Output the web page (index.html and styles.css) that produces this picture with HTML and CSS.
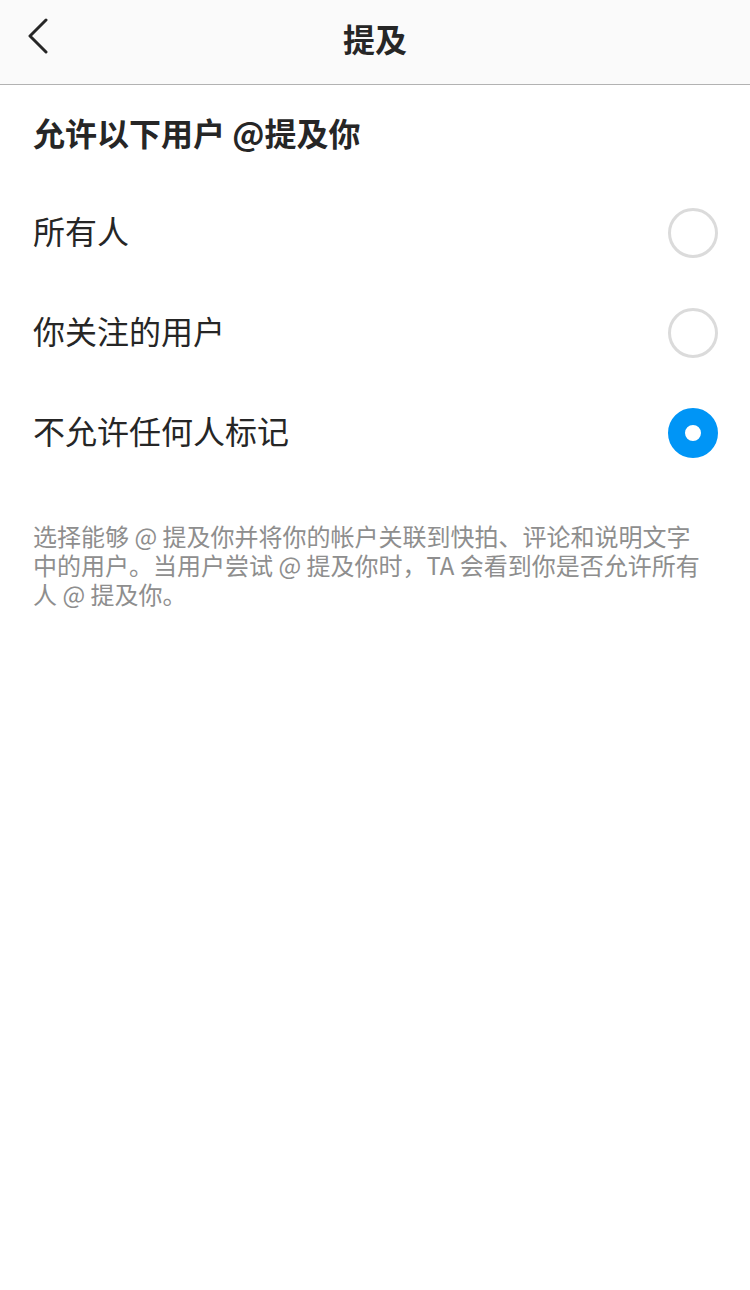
FILE: index.html
```html
<!DOCTYPE html>
<html lang="zh-CN">
  <head>
    <meta charset="UTF-8" />
    <meta name="viewport" content="width=device-width, initial-scale=1.0" />
    <title>提及</title>
    <link rel="stylesheet" href="styles.css">
  </head>
  <body>
    <header class="nav-bar">
      <button class="back-button" aria-label="返回">
        <svg width="24" height="36" viewBox="0 0 24 36">
          <polyline points="20,2 4,18 20,34" fill="none" stroke="#262626" stroke-width="3" stroke-linecap="round" stroke-linejoin="round" />
        </svg>
      </button>
      <h1 class="nav-title">提及</h1>
    </header>

    <main class="settings">
      <h2 class="section-title">允许以下用户 @提及你</h2>

      <div class="option-list">
        <label class="option">
          <span class="option-label">所有人</span>
          <span class="radio"></span>
        </label>
        <label class="option">
          <span class="option-label">你关注的用户</span>
          <span class="radio"></span>
        </label>
        <label class="option">
          <span class="option-label">不允许任何人标记</span>
          <span class="radio checked"></span>
        </label>
      </div>

      <p class="hint">
        选择能够 @ 提及你并将你的帐户关联到快拍、评论和说明文字中的用户。当用户尝试 @ 提及你时，TA 会看到你是否允许所有人 @ 提及你。
      </p>
    </main>
  </body>
</html>
```

FILE: styles.css
```css
body {
  margin: 0;
  background: #ffffff;
  font-family: "Noto Sans CJK SC", "Noto Sans", sans-serif;
  color: #262626;
}

.nav-bar {
  height: 84px;
  background: #fafafa;
  border-bottom: 1px solid #b2b2b2;
  display: flex;
  align-items: center;
  justify-content: center;
  position: relative;
}

.back-button {
  position: absolute;
  left: 26px;
  top: 18px;
  padding: 0;
  border: none;
  background: none;
  display: flex;
}

.nav-title {
  margin: 0;
  font-size: 32px;
  font-weight: bold;
  line-height: 1;
  padding-bottom: 8px;
}

.settings {
  padding: 0 33px;
}

.section-title {
  margin: 0;
  height: 98px;
  display: flex;
  align-items: center;
  font-size: 32px;
  font-weight: bold;
  padding-bottom: 4px;
  box-sizing: border-box;
}

.option {
  height: 100px;
  display: flex;
  align-items: center;
  justify-content: space-between;
}

.option-label {
  font-size: 32px;
  line-height: 1;
  padding-bottom: 6px;
}

.radio {
  width: 50px;
  height: 50px;
  box-sizing: border-box;
  border: 3px solid #dbdbdb;
  border-radius: 50%;
  margin-right: -1px;
}

.radio.checked {
  border: 17px solid #0095f6;
  background: #ffffff;
}

.hint {
  margin: 38px 0 0;
  padding-right: 12px;
  font-size: 24px;
  line-height: 29px;
  color: #8e8e8e;
}
```
